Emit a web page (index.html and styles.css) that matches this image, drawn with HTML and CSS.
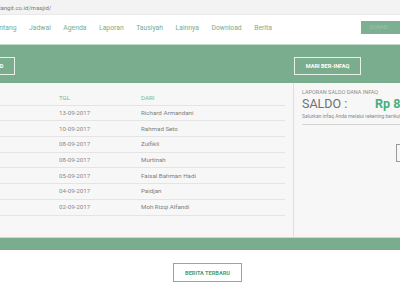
FILE: index.html
```html
<!DOCTYPE html>
<html>
<head>
<meta charset="utf-8">
<link rel="stylesheet" href="styles.css">
</head>
<body>
<div class="urlbar"><span class="url">langit.co.id/masjid/</span></div>
<div class="nav">
  <div class="links">
    <span>Tentang</span><span>Jadwal</span><span>Agenda</span><span>Laporan</span><span>Tausiyah</span><span>Lainnya</span><span>Download</span><span>Berita</span>
  </div>
  <div class="navbtn">DONASI</div>
</div>
<div class="band">
  <div class="obtn left">MASJID</div>
  <div class="obtn right">MARI BER-INFAQ</div>
</div>
<div class="content">
  <div class="tablecol">
    <div class="row head"><span></span><span>TGL</span><span>DARI</span></div>
    <div class="row"><span></span><span>13-09-2017</span><span>Richard Armandani</span></div>
    <div class="row"><span></span><span>10-09-2017</span><span>Rahmad Seto</span></div>
    <div class="row"><span></span><span>08-09-2017</span><span>Zulfikli</span></div>
    <div class="row"><span></span><span>08-09-2017</span><span>Murtinah</span></div>
    <div class="row"><span></span><span>05-09-2017</span><span>Faisal Bahman Hadi</span></div>
    <div class="row"><span></span><span>04-09-2017</span><span>Paidjan</span></div>
    <div class="row"><span></span><span>02-09-2017</span><span>Moh Rizqi Alfandi</span></div>
  </div>
  <div class="divider"></div>
  <div class="panel">
    <div class="ptitle">LAPORAN SALDO DANA INFAQ</div>
    <div class="saldo"><span class="lbl">SALDO :</span><span class="amt">Rp 8.250.000</span></div>
    <div class="note">Salurkan infaq Anda melalui rekening berikut</div>
    <div class="pbox"><div class="pbtn">DETAIL</div></div>
  </div>
</div>
<div class="band2"></div>
<div class="footer"><div class="fbtn">BERITA TERBARU</div></div>
</body>
</html>
```

FILE: styles.css
```css
html, body { margin: 0; padding: 0; }
body {
  width: 400px;
  height: 284px;
  overflow: hidden;
  background: #ffffff;
  font-family: Roboto, "Liberation Sans", sans-serif;
}
.urlbar {
  height: 15px;
  background: #f3f3f3;
  border-bottom: 1px solid #e9e9e9;
  box-sizing: border-box;
  display: flex;
  align-items: center;
}
.url {
  font-size: 6px;
  color: #7a7a7a;
  margin-left: -1px;
}
.nav {
  height: 29px;
  display: flex;
  align-items: center;
  justify-content: space-between;
  background: #ffffff;
}
.links {
  display: flex;
  gap: 12.5px;
  margin-left: -8px;
  font-size: 6.8px;
  color: #77ad8d;
  margin-top: -4px;
}
.navbtn {
  width: 44px;
  height: 13px;
  margin-right: -5px;
  margin-top: -5px;
  background: #7db092;
  color: #98c4aa;
  font-size: 5px;
  display: flex;
  align-items: center;
  padding-left: 9px;
  box-sizing: border-box;
}
.band {
  height: 35px;
  background: #79ad8e;
  border-top: 1px solid #c2dccc;
  display: flex;
  align-items: center;
  justify-content: space-between;
  padding-top: 3px;
}
.obtn {
  height: 18px;
  box-sizing: border-box;
  border: 1px solid #e6f1ea;
  color: #ffffff;
  font-size: 5.6px;
  font-weight: bold;
  display: flex;
  align-items: center;
  justify-content: center;
}
.obtn.left { width: 44px; margin-left: -29px; }
.obtn.right { width: 67px; margin-right: 39px; }
.content {
  height: 149px;
  background: #f7f7f7;
  display: flex;
  border-bottom: 5px solid #faf4f5;
}
.tablecol {
  width: 285px;
  padding-top: 8px;
}
.row {
  display: grid;
  grid-template-columns: 59px 82px 1fr;
  height: 14.7px;
  border-bottom: 1px solid #e4e4e4;
  align-items: center;
  font-size: 6.2px;
  color: #8a8a8a;
}
.row span:nth-child(3) { color: #7d7d7d; }
.row.head { color: #76b893; height: 13.7px; }
.row.head span:nth-child(3) { color: #76b893; }
.divider {
  width: 1px;
  margin-left: 8px;
  background: #dedede;
  margin-bottom: -5px;
}
.panel {
  flex: 1;
  padding: 6px 0 0 8px;
  overflow: hidden;
  white-space: nowrap;
}
.ptitle {
  font-size: 5.5px;
  color: #8d8d8d;
}
.saldo {
  display: flex;
  align-items: baseline;
  margin-top: 1px;
  height: 17px;
}
.lbl {
  font-size: 12.5px;
  color: #707070;
  width: 73px;
  flex-shrink: 0;
}
.amt {
  font-size: 12.5px;
  font-weight: bold;
  color: #44b07f;
  flex-shrink: 0;
}
.note {
  font-size: 5px;
  color: #8a8a8a;
  padding-bottom: 5px;
  border-bottom: 1px solid #d4d4d4;
}
.pbox {
  display: flex;
  padding-top: 19px;
  padding-left: 94px;
}
.pbtn {
  width: 40px;
  height: 18px;
  border: 1px solid #9a9a9a;
  box-sizing: border-box;
  font-size: 5px;
  color: #777;
  padding-left: 8px;
  display: flex;
  align-items: center;
  flex-shrink: 0;
}
.band2 {
  height: 12px;
  background: #79ad8e;
  border-top: 1px solid #bfe0cc;
}
.footer {
  display: flex;
  padding-top: 13px;
  padding-left: 173px;
}
.fbtn {
  width: 69px;
  height: 19px;
  box-sizing: border-box;
  border: 1px solid #7fb497;
  color: #3f9f80;
  font-size: 5.6px;
  font-weight: bold;
  display: flex;
  align-items: center;
  justify-content: center;
}
```
